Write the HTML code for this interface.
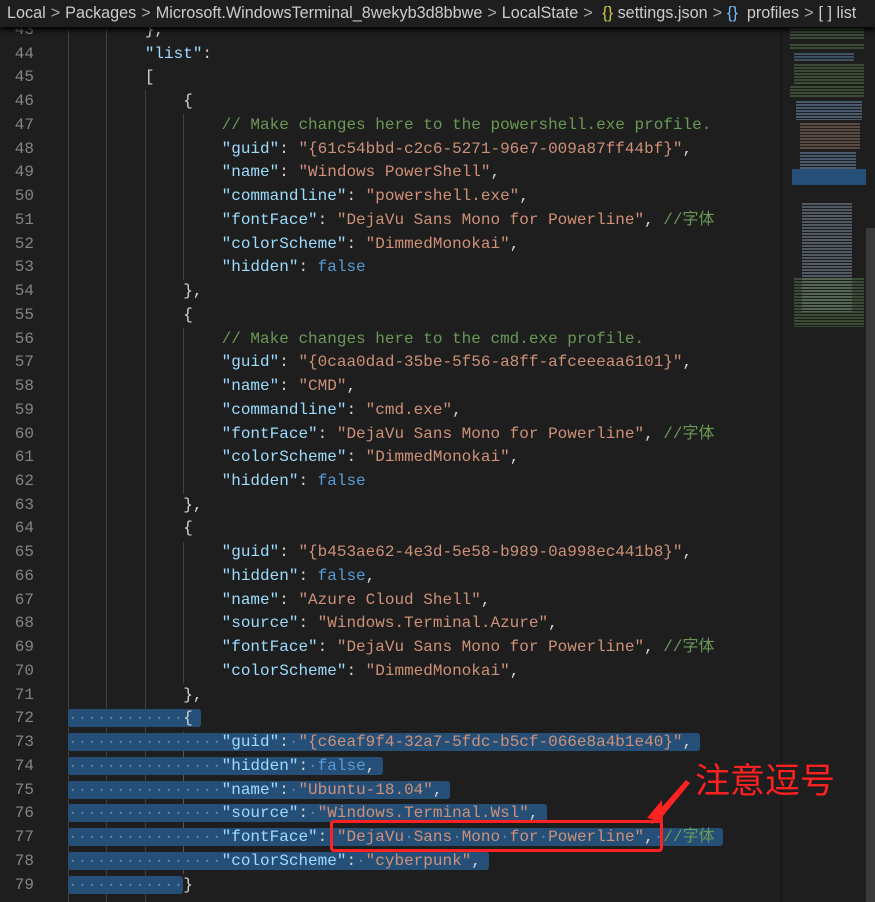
<!DOCTYPE html>
<html style="width:875px;height:902px;overflow:hidden"><head><meta charset="utf-8">
<style>
*{margin:0;padding:0;box-sizing:border-box}
body{width:875px;height:902px;background:#1e1e1e;overflow:hidden;position:relative;font-family:"Liberation Mono","Noto Sans CJK SC",monospace;}
.bc{position:absolute;left:0;top:0;width:875px;height:27px;background:#1e1e1e;z-index:5;box-shadow:0 3px 5px #000;font-family:"Liberation Sans",sans-serif;font-size:16.2px;color:#cccccc;white-space:nowrap;line-height:27px;padding-left:7px}
.bc .c{color:#aaa;margin:0 5px}
.code{position:absolute;left:0;top:1.5px;width:875px;height:902px}
.ln{position:absolute;left:0;width:34px;text-align:right;color:#858585;font-size:16px;height:23.74px;line-height:23.74px}
.l{position:absolute;left:68px;font-size:16px;height:23.74px;line-height:23.74px;white-space:pre;color:#d4d4d4}
.k{color:#9cdcfe}.s{color:#ce9178}.cm{color:#6a9955}.b{color:#569cd6}
.sel{background:#264f78;border-radius:3px;padding-right:8px}
.d{color:#5b83ab}
.g{position:absolute;width:1px;background:#404040}
.mm{position:absolute;left:781px;top:27px;width:94px;height:875px;background:#1e1e1e;border-left:1px solid #151515}
.mm i{position:absolute;display:block;background:repeating-linear-gradient(#1e1e1e 0 1px,var(--c) 1px 3px);opacity:.55}
</style></head><body>
<div class="bc">Local<span class="c">&gt;</span>Packages<span class="c">&gt;</span>Microsoft.WindowsTerminal_8wekyb3d8bbwe<span class="c">&gt;</span>LocalState<span class="c">&gt;</span> <span style="color:#cbcb41">{}</span> settings.json<span class="c">&gt;</span><span style="color:#75beff">{}</span>&nbsp; profiles<span class="c">&gt;</span>[ ] list</div>

<div class="code">
<div class="g" style="left:68px;top:17px;height:885px"></div>
<div class="g" style="left:106px;top:17px;height:885px"></div>
<div class="g" style="left:145px;top:88px;height:814px"></div>
<div class="g" style="left:183px;top:112px;height:166px"></div>
<div class="g" style="left:183px;top:326px;height:166px"></div>
<div class="g" style="left:183px;top:540px;height:142px"></div>
<div class="g" style="left:183px;top:730px;height:142px;background:#555"></div>

<div class="ln" style="top:17.4px">43</div><div class="l" style="top:17.4px">        },</div>
<div class="ln" style="top:41.1px">44</div><div class="l" style="top:41.1px">        <span class="k">"list"</span>:</div>
<div class="ln" style="top:64.9px">45</div><div class="l" style="top:64.9px">        [</div>
<div class="ln" style="top:88.6px">46</div><div class="l" style="top:88.6px">            {</div>
<div class="ln" style="top:112.4px">47</div><div class="l" style="top:112.4px">                <span class="cm">// Make changes here to the powershell.exe profile.</span></div>
<div class="ln" style="top:136.1px">48</div><div class="l" style="top:136.1px">                <span class="k">"guid"</span>: <span class="s">"{61c54bbd-c2c6-5271-96e7-009a87ff44bf}"</span>,</div>
<div class="ln" style="top:159.8px">49</div><div class="l" style="top:159.8px">                <span class="k">"name"</span>: <span class="s">"Windows PowerShell"</span>,</div>
<div class="ln" style="top:183.6px">50</div><div class="l" style="top:183.6px">                <span class="k">"commandline"</span>: <span class="s">"powershell.exe"</span>,</div>
<div class="ln" style="top:207.3px">51</div><div class="l" style="top:207.3px">                <span class="k">"fontFace"</span>: <span class="s">"DejaVu Sans Mono for Powerline"</span>, <span class="cm">//字体</span></div>
<div class="ln" style="top:231.1px">52</div><div class="l" style="top:231.1px">                <span class="k">"colorScheme"</span>: <span class="s">"DimmedMonokai"</span>,</div>
<div class="ln" style="top:254.8px">53</div><div class="l" style="top:254.8px">                <span class="k">"hidden"</span>: <span class="b">false</span></div>
<div class="ln" style="top:278.5px">54</div><div class="l" style="top:278.5px">            },</div>
<div class="ln" style="top:302.3px">55</div><div class="l" style="top:302.3px">            {</div>
<div class="ln" style="top:326.0px">56</div><div class="l" style="top:326.0px">                <span class="cm">// Make changes here to the cmd.exe profile.</span></div>
<div class="ln" style="top:349.8px">57</div><div class="l" style="top:349.8px">                <span class="k">"guid"</span>: <span class="s">"{0caa0dad-35be-5f56-a8ff-afceeeaa6101}"</span>,</div>
<div class="ln" style="top:373.5px">58</div><div class="l" style="top:373.5px">                <span class="k">"name"</span>: <span class="s">"CMD"</span>,</div>
<div class="ln" style="top:397.2px">59</div><div class="l" style="top:397.2px">                <span class="k">"commandline"</span>: <span class="s">"cmd.exe"</span>,</div>
<div class="ln" style="top:421.0px">60</div><div class="l" style="top:421.0px">                <span class="k">"fontFace"</span>: <span class="s">"DejaVu Sans Mono for Powerline"</span>, <span class="cm">//字体</span></div>
<div class="ln" style="top:444.7px">61</div><div class="l" style="top:444.7px">                <span class="k">"colorScheme"</span>: <span class="s">"DimmedMonokai"</span>,</div>
<div class="ln" style="top:468.5px">62</div><div class="l" style="top:468.5px">                <span class="k">"hidden"</span>: <span class="b">false</span></div>
<div class="ln" style="top:492.2px">63</div><div class="l" style="top:492.2px">            },</div>
<div class="ln" style="top:515.9px">64</div><div class="l" style="top:515.9px">            {</div>
<div class="ln" style="top:539.7px">65</div><div class="l" style="top:539.7px">                <span class="k">"guid"</span>: <span class="s">"{b453ae62-4e3d-5e58-b989-0a998ec441b8}"</span>,</div>
<div class="ln" style="top:563.4px">66</div><div class="l" style="top:563.4px">                <span class="k">"hidden"</span>: <span class="b">false</span>,</div>
<div class="ln" style="top:587.2px">67</div><div class="l" style="top:587.2px">                <span class="k">"name"</span>: <span class="s">"Azure Cloud Shell"</span>,</div>
<div class="ln" style="top:610.9px">68</div><div class="l" style="top:610.9px">                <span class="k">"source"</span>: <span class="s">"Windows.Terminal.Azure"</span>,</div>
<div class="ln" style="top:634.6px">69</div><div class="l" style="top:634.6px">                <span class="k">"fontFace"</span>: <span class="s">"DejaVu Sans Mono for Powerline"</span>, <span class="cm">//字体</span></div>
<div class="ln" style="top:658.4px">70</div><div class="l" style="top:658.4px">                <span class="k">"colorScheme"</span>: <span class="s">"DimmedMonokai"</span>,</div>
<div class="ln" style="top:682.1px">71</div><div class="l" style="top:682.1px">            },</div>
<div class="ln" style="top:705.9px">72</div><div class="l" style="top:705.9px"><span class="sel"><span class="d">············</span>{</span></div>
<div class="ln" style="top:729.6px">73</div><div class="l" style="top:729.6px"><span class="sel"><span class="d">················</span><span class="k">"guid"</span>:<span class="d">·</span><span class="s">"{c6eaf9f4-32a7-5fdc-b5cf-066e8a4b1e40}"</span>,</span></div>
<div class="ln" style="top:753.3px">74</div><div class="l" style="top:753.3px"><span class="sel"><span class="d">················</span><span class="k">"hidden"</span>:<span class="d">·</span><span class="b">false</span>,</span></div>
<div class="ln" style="top:777.1px">75</div><div class="l" style="top:777.1px"><span class="sel"><span class="d">················</span><span class="k">"name"</span>:<span class="d">·</span><span class="s">"Ubuntu-18.04"</span>,</span></div>
<div class="ln" style="top:800.8px">76</div><div class="l" style="top:800.8px"><span class="sel"><span class="d">················</span><span class="k">"source"</span>:<span class="d">·</span><span class="s">"Windows.Terminal.Wsl"</span>,</span></div>
<div class="ln" style="top:824.6px">77</div><div class="l" style="top:824.6px"><span class="sel"><span class="d">················</span><span class="k">"fontFace"</span>:<span class="d">·</span><span class="s">"DejaVu<span class="d">·</span>Sans<span class="d">·</span>Mono<span class="d">·</span>for<span class="d">·</span>Powerline"</span>,<span class="d">·</span><span class="cm">//字体</span></span></div>
<div class="ln" style="top:848.3px">78</div><div class="l" style="top:848.3px"><span class="sel"><span class="d">················</span><span class="k">"colorScheme"</span>:<span class="d">·</span><span class="s">"cyberpunk"</span>,</span></div>
<div class="ln" style="top:872.0px">79</div><div class="l" style="top:872.0px"><span class="sel" style="padding-right:0"><span class="d">············</span></span>}</div>
</div>

<div style="position:absolute;left:330px;top:820px;width:333px;height:32px;border:3px solid #ff2222;border-radius:4px;z-index:3"></div>
<svg style="position:absolute;left:0;top:0;z-index:4" width="875" height="902">
<polygon points="690,783 658,822 651,824 654,816 686,780" fill="#ff2222"/>
<polygon points="647,818 662,800 663,822" fill="#ff2222"/>
</svg>
<div style="position:absolute;left:695px;top:757px;font-family:'Noto Sans CJK SC',sans-serif;font-size:35px;color:#ff2020;line-height:44px;z-index:4">注意逗号</div>

<div class="mm">
<i style="--c:#55704a;left:8px;top:0;width:74px;height:12px"></i>
<i style="--c:#55704a;left:8px;top:16px;width:74px;height:6px"></i>
<i style="--c:#5a7a9a;left:12px;top:25px;width:60px;height:9px"></i>
<i style="--c:#55704a;left:12px;top:36px;width:70px;height:21px"></i>
<i style="--c:#55704a;left:8px;top:58px;width:74px;height:12px"></i>
<i style="--c:#6a8aaa;left:14px;top:73px;width:66px;height:20px"></i>
<i style="--c:#8a7060;left:18px;top:95px;width:60px;height:28px"></i>
<i style="--c:#6a8aaa;left:18px;top:124px;width:56px;height:18px"></i>
<div style="position:absolute;left:10px;top:142px;width:74px;height:16px;background:#264f78"></div>
<i style="--c:#7a8a9a;left:20px;top:175px;width:50px;height:110px"></i>
<i style="--c:#55704a;left:12px;top:250px;width:70px;height:50px"></i>
</div>
<div style="position:absolute;left:866px;top:228px;width:9px;height:674px;background:#3a3a3a"></div>
</body></html>
